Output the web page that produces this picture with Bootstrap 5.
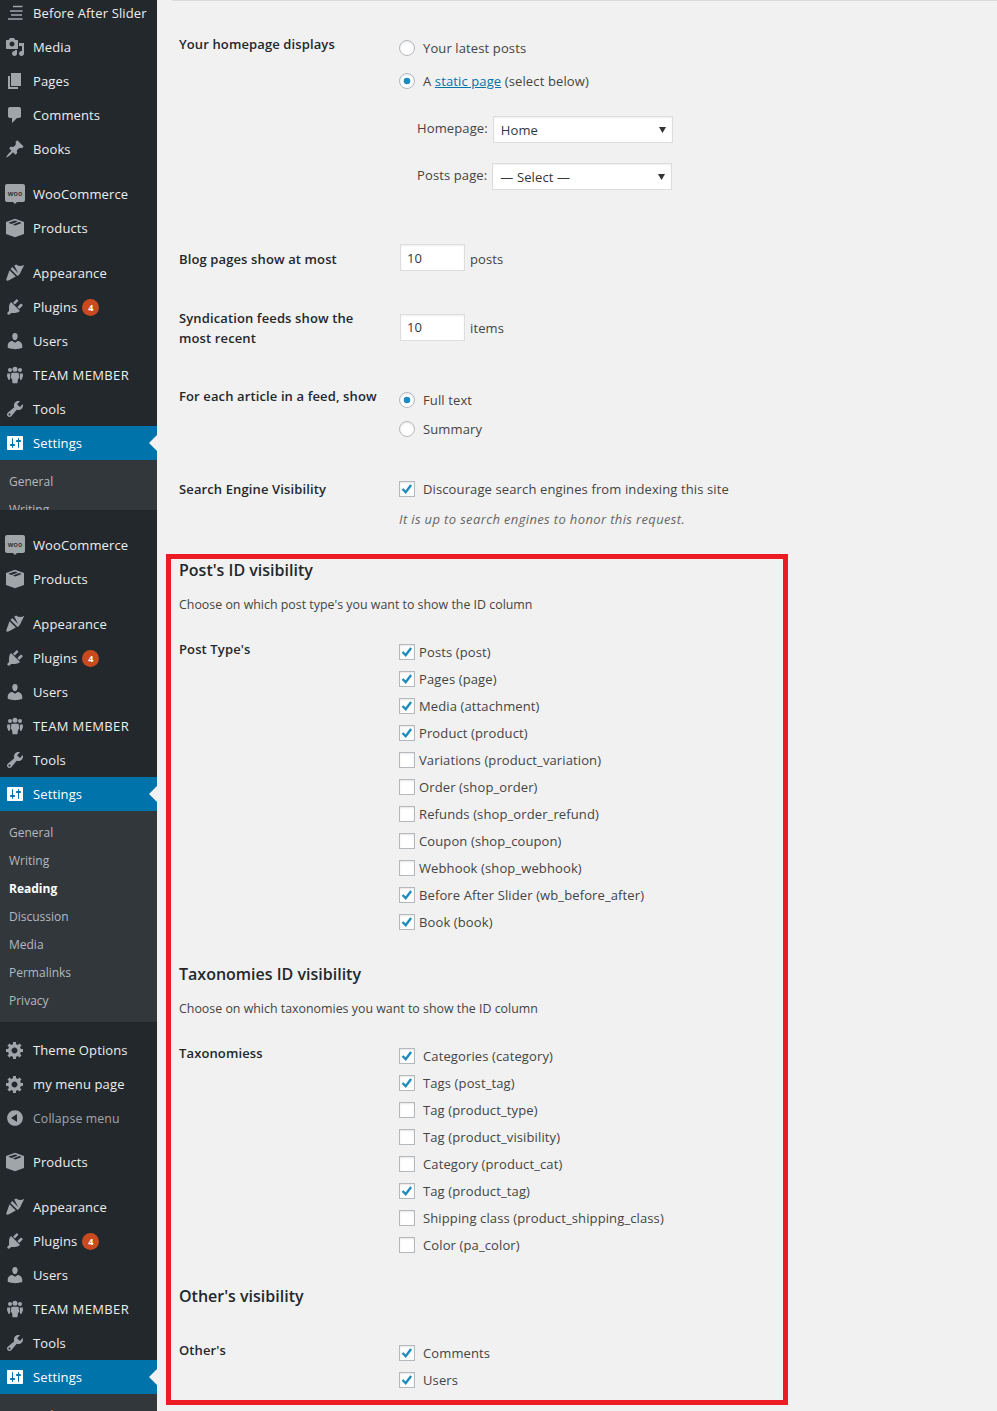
<!DOCTYPE html>
<html lang="en">
<head>
<meta charset="utf-8">
<title>Reading Settings</title>
<link href="https://cdn.jsdelivr.net/npm/bootstrap@5.3.0/dist/css/bootstrap.min.css" rel="stylesheet">
<style>
html,body{margin:0;background:#f1f1f1}
body{font-family:"Open Sans","Noto Sans","Liberation Sans",sans-serif;font-size:13px;line-height:20px;color:#444;overflow:hidden;letter-spacing:.12px}
.shell{height:1411px;width:997px;overflow:hidden;display:flex;align-items:flex-start}
.wp-side{width:157px;height:1411px;flex:none;background:#23282d;color:#eee;overflow:hidden}
.wp-item{height:34px;display:flex;align-items:center;position:relative;color:#eee;text-decoration:none;white-space:nowrap}
.wp-item.first{height:30px;padding-bottom:4px}
.wp-item svg.ico{width:20px;height:20px;margin-left:5px;margin-right:8px;flex:none;color:#a0a5aa;fill:currentColor}
.wp-item.active{background:#0073aa;color:#fff}
.wp-item.active svg.ico{color:#fff}
.wp-item.active::after{content:"";position:absolute;right:0;top:9px;border:8px solid transparent;border-right-color:#f1f1f1;border-left:0}
.wp-item.muted{color:#a0a5aa;font-size:12.3px}
.mut-t{margin-top:2px}
.wp-item.caps{letter-spacing:.38px}
.sep{margin-top:11px}
.sep10{margin-top:10px}
.wp-sub{background:#32373c;padding:8px 0 7px}
.wp-sub.clip{height:50px;overflow:hidden;padding-bottom:0;margin-bottom:18px}
.wp-sub a{display:block;height:28px;line-height:28px;padding-left:9px;color:#b4b9be;font-size:12px;letter-spacing:0;text-decoration:none}
.wp-sub a.cur{color:#fff;font-weight:700}
.pill{width:17px;height:17px;border-radius:50%;background:#ca4a1f;color:#fff;font-size:9px;line-height:17px;text-align:center;font-weight:700;margin-left:5px}
.wp-main{flex:1;min-width:0;position:relative}
.topline{height:1px;background:#dcdcdc;margin-left:15px}
.opt{display:flex;padding-left:22px}
.lab{width:220px;flex:none;font-weight:600;color:#23282d;padding-right:20px}
.line{display:flex;align-items:center;height:20px;white-space:nowrap}
.line input{margin:0 8px 0 0}
.rc{padding-top:4px}
.r-home{margin-top:33px}
.r-static{margin-top:13px}
.pick{display:flex;align-items:center;margin-left:18px;height:27px;white-space:nowrap}
.pick.a{margin-top:25px}
.pick.b{margin-top:20px}
.pick-name{margin-bottom:4px}
.pick .wp-select{margin-left:5px}
.wp-select.form-select{width:180px;height:27px;min-height:0;padding:0 20px 0 7px;border:1px solid #ddd;border-radius:0;font:inherit;letter-spacing:inherit;color:#32373c;background-color:#fff;box-shadow:inset 0 1px 2px rgba(0,0,0,.07);background-image:url("data:image/svg+xml,%3Csvg xmlns='http://www.w3.org/2000/svg' viewBox='0 0 7 6'%3E%3Cpath fill='%23333' d='M0 0h7L3.500 6z'/%3E%3C/svg%3E");background-size:7px 6px;background-position:right 6px center}
.r-blog{margin-top:55px;height:27px;align-items:center}
.r-synd{margin-top:36px;align-items:center}
.r-feed{margin-top:38px}
.r-summary{margin-top:9px}
.r-search{margin-top:40px}
.r-note{margin-top:10px;font-style:italic;color:#666;letter-spacing:.36px}
.num.form-control{width:65px;height:27px;min-height:0;padding:0 6px;margin:-2px 5px 0 1px;border:1px solid #ddd;border-radius:0;font:inherit;letter-spacing:inherit;color:#32373c;background:#fff;box-shadow:inset 0 1px 2px rgba(0,0,0,.07)}
.tick.form-check-input{width:16px;height:16px;flex:none;border:1px solid #b4b9be;background-color:#fff;box-shadow:inset 0 1px 2px rgba(0,0,0,.1);background-size:16px 16px}
.tick.form-check-input[type=checkbox]{border-radius:0}
.tick.form-check-input:checked[type=checkbox]{background-color:#fff;border-color:#b4b9be;background-image:url("data:image/svg+xml,%3Csvg xmlns='http://www.w3.org/2000/svg' viewBox='0 0 16 16'%3E%3Cpath fill='none' stroke='%231e8cbe' stroke-width='2.400' d='M3.500 8l3.200 3.200 5.400-7.200'/%3E%3C/svg%3E")}
.tick.form-check-input:checked[type=radio]{background-color:#fff;border-color:#b4b9be;background-image:url("data:image/svg+xml,%3Csvg xmlns='http://www.w3.org/2000/svg' viewBox='0 0 16 16'%3E%3Ccircle cx='8' cy='8' r='3.300' fill='%231e8cbe'/%3E%3C/svg%3E")}
.redbox{width:622px;margin:25px 0 0 9px;border:5px solid #ed1c24;padding:0 0 7px 8px}
.redbox .opt{padding-left:0}
.head2{font-size:16px;line-height:22px;font-weight:600;color:#23282d;margin:0;white-space:nowrap;letter-spacing:0}
.desc{margin:14px 0 0;height:20px;font-size:12.4px;letter-spacing:0}
.r-types{margin-top:23px}
.h-tax{margin-top:28px}
.h-oth{margin-top:27px}
.r-oth{margin-top:32px}
.redbox .lab{padding-top:1px}
.ck{display:flex;align-items:center;height:27px;white-space:nowrap}
.ck input{margin:0 4px 0 0}
.ck.wide input{margin-right:8px}
a.wp-link{color:#0073aa}
</style>
</head>
<body>
<svg width="0" height="0" class="d-none" aria-hidden="true">
<symbol id="i-lines" viewBox="0 0 20 20"><path d="M8 2.700h9.500v1.600H8zM5 7.200h12.500v1.600H5zM6 11.200h11v1.600H6zM3 15.200h14.500v1.600H3z"/></symbol>
<symbol id="i-media" viewBox="0 0 20 20"><path d="M13 11V4c0-.55-.45-1-1-1h-1.670L9 1H5L3.670 3H2c-.55 0-1 .45-1 1v7c0 .55.45 1 1 1h10c.55 0 1-.45 1-1zM7 4.500c1.380 0 2.500 1.120 2.500 2.500S8.380 9.500 7 9.500 4.500 8.380 4.500 7 5.620 4.500 7 4.500zM14 6h5v10.500c0 1.380-1.120 2.500-2.500 2.500S14 17.880 14 16.500s1.120-2.500 2.500-2.500c.17 0 .34.02.5.05V9h-3V6zm-4 8.050V13h2v3.500c0 1.380-1.120 2.500-2.500 2.500S7 17.880 7 16.500 8.120 14 9.500 14c.17 0 .34.02.5.05z" fill-rule="evenodd"/></symbol>
<symbol id="i-page" viewBox="0 0 20 20"><path d="M6 15V2h10v13H6zm-1 1h8v2H3V5h2v11z"/></symbol>
<symbol id="i-comment" viewBox="0 0 20 20"><path d="M5 2h9c1.100 0 2 .9 2 2v7c0 1.100-.9 2-2 2h-2l-5 5v-5H5c-1.100 0-2-.9-2-2V4c0-1.100.9-2 2-2z"/></symbol>
<symbol id="i-pin" viewBox="0 0 20 20"><path d="M10.440 3.020l1.820-1.820 6.360 6.350-1.830 1.820c-1.050-.68-2.480-.57-3.410.36l-.75.75c-.92.93-1.040 2.350-.35 3.410l-1.830 1.820-2.410-2.410-2.800 2.790c-.42.42-3.380 2.710-3.800 2.290s1.860-3.390 2.280-3.810l2.790-2.790L4.100 9.360l1.830-1.820c1.050.69 2.480.57 3.400-.36l.75-.75c.93-.92 1.050-2.350.36-3.410z"/></symbol>
<symbol id="i-box" viewBox="0 0 20 20"><path fill-rule="evenodd" d="M10 .8l9 3.300v11.800l-9 3.300-9-3.300V4.100zM3.300 4.700l7 2.800 6.300-2.600-2.300-.9-6.400 2.600-1.400-.6 6.300-2.600L10 2.500z"/></symbol>
<symbol id="i-brush" viewBox="0 0 20 20"><path d="M9.200 2.600l2-1.200c2.500 1.900 5.300 2 8 .3-.9 3-2.800 4.700-3.800 8.300l-1.400 1.500zM7.300 4.100l7.200 7.300-2 1.700-7-7.100zM4.500 7.300l6.300 6.300-6.800 3.700c-1.700.8-3.300.7-2.600-1.200z"/></symbol>
<symbol id="i-plug" viewBox="0 0 20 20"><path d="M13.110 4.360L9.870 7.600 8 5.730l3.240-3.240c.35-.34 1.050-.2 1.560.32.52.51.66 1.210.31 1.550zm-8 1.770l.91-1.120 9.010 9.010-1.190.84c-.71.71-2.630 1.160-3.820 1.160H6.140L4.900 17.260c-.59.59-1.540.59-2.120 0-.59-.58-.59-1.530 0-2.120l1.240-1.240v-3.880c0-1.130.4-3.190 1.090-3.890zm7.260 3.970l3.240-3.240c.34-.35 1.040-.21 1.550.31.52.51.66 1.210.31 1.550l-3.240 3.250z"/></symbol>
<symbol id="i-user" viewBox="0 0 20 20"><path d="M10 9.250c-2.270 0-2.730-3.440-2.730-3.440C7 4.020 7.820 2 9.960 2c2.150 0 2.970 2.020 2.700 3.810 0 0-.4 3.440-2.660 3.440zm0 2.570L12.720 10c2.390 0 4.520 2.330 4.520 4.530v2.490s-3.650 1.130-7.240 1.130c-3.650 0-7.240-1.130-7.240-1.130v-2.490c0-2.250 1.940-4.480 4.470-4.480z"/></symbol>
<symbol id="i-group" viewBox="0 0 20 20"><circle cx="5" cy="5" r="2"/><circle cx="15" cy="5" r="2"/><circle cx="10" cy="4.300" r="2.500"/><path d="M2.300 8.500h3l-.3 6.200H3.400L2 11zM17.700 8.500h-3l.3 6.200h1.600L18 11zM6.500 7.800h7l.8 5-1.300 1.300-.6 4.200H7.600L7 14.100l-1.300-1.300z"/></symbol>
<symbol id="i-tool" viewBox="0 0 20 20"><path fill-rule="evenodd" d="M16.680 9.770c-1.340 1.340-3.300 1.670-4.950.99l-5.410 6.520c-.99.99-2.590.99-3.570 0-.99-.98-.99-2.580 0-3.570l6.520-5.420c-.68-1.650-.35-3.610.99-4.950 1.280-1.280 3.120-1.620 4.720-1.060l-2.890 2.890 2.820 2.820 2.860-2.870c.53 1.580.18 3.400-1.090 4.670zM3.810 16.210c.4.39 1.030.39 1.420 0 .4-.4.4-1.030 0-1.430-.39-.39-1.020-.39-1.420 0-.39.4-.39 1.030 0 1.430z"/></symbol>
<symbol id="i-set" viewBox="0 0 20 20"><path fill-rule="evenodd" d="M18 16V4c0-.55-.45-1-1-1H3c-.55 0-1 .45-1 1v12c0 .55.45 1 1 1h14c.55 0 1-.45 1-1zM8 11h1c.55 0 1 .45 1 1s-.45 1-1 1H8v1.500c0 .28-.22.5-.5.5s-.5-.22-.5-.5V13H6c-.55 0-1-.45-1-1s.45-1 1-1h1V5.500c0-.28.22-.5.5-.5s.5.22.5.5V11zm5-2h-1c-.55 0-1-.45-1-1s.45-1 1-1h1V5.500c0-.28.22-.5.5-.5s.5.22.5.5V7h1c.55 0 1 .45 1 1s-.45 1-1 1h-1v5.500c0 .28-.22.5-.5.5s-.5-.22-.5-.5V9z"/></symbol>
<symbol id="i-gear" viewBox="0 0 20 20"><path fill-rule="evenodd" d="M18 12h-2.180c-.17.7-.44 1.350-.81 1.930l1.540 1.540-2.100 2.100-1.540-1.540c-.58.36-1.230.64-1.910.81V19H8v-2.180c-.68-.17-1.330-.45-1.910-.81l-1.540 1.540-2.120-2.120 1.540-1.540c-.36-.58-.63-1.230-.8-1.890H1V9h2.180c.17-.7.44-1.350.8-1.930L2.440 5.530l2.100-2.100 1.540 1.540c.58-.36 1.230-.63 1.920-.8V2h3v2.180c.68.17 1.330.44 1.910.8l1.540-1.540 2.120 2.120-1.540 1.540c.36.58.64 1.230.81 1.900H18V12zm-8.500 1.500c1.660 0 3-1.340 3-3s-1.340-3-3-3-3 1.340-3 3 1.340 3 3 3z"/></symbol>
<symbol id="i-collapse" viewBox="0 0 20 20"><path fill-rule="evenodd" d="M10 2.160c4.330 0 7.840 3.510 7.840 7.840s-3.510 7.840-7.840 7.840S2.160 14.330 2.160 10 5.670 2.160 10 2.160zM12 14V6l-6 4z"/></symbol>
<symbol id="i-woo" viewBox="0 0 20 20"><path d="M2 0h16c1.100 0 2 .9 2 2v14c0 1.100-.9 2-2 2h-6l-2 2-2-2H2c-1.100 0-2-.9-2-2V2C0 .9.9 0 2 0z"/><text x="10" y="11.500" text-anchor="middle" font-family="Open Sans, sans-serif" font-size="7" font-weight="600" fill="#23282d">woo</text></symbol>
</svg>

<div class="shell">
<nav class="wp-side">
  <a class="wp-item first" href="#"><svg class="ico"><use href="#i-lines"/></svg>Before After Slider</a>
  <a class="wp-item" href="#"><svg class="ico"><use href="#i-media"/></svg>Media</a>
  <a class="wp-item" href="#"><svg class="ico"><use href="#i-page"/></svg>Pages</a>
  <a class="wp-item" href="#"><svg class="ico"><use href="#i-comment"/></svg>Comments</a>
  <a class="wp-item" href="#"><svg class="ico"><use href="#i-pin"/></svg>Books</a>
  <a class="wp-item sep" href="#"><svg class="ico"><use href="#i-woo"/></svg>WooCommerce</a>
  <a class="wp-item" href="#"><svg class="ico"><use href="#i-box"/></svg>Products</a>
  <a class="wp-item sep" href="#"><svg class="ico"><use href="#i-brush"/></svg>Appearance</a>
  <a class="wp-item" href="#"><svg class="ico"><use href="#i-plug"/></svg>Plugins<span class="pill">4</span></a>
  <a class="wp-item" href="#"><svg class="ico"><use href="#i-user"/></svg>Users</a>
  <a class="wp-item caps" href="#"><svg class="ico"><use href="#i-group"/></svg>TEAM MEMBER</a>
  <a class="wp-item" href="#"><svg class="ico"><use href="#i-tool"/></svg>Tools</a>
  <a class="wp-item active" href="#"><svg class="ico"><use href="#i-set"/></svg>Settings</a>
  <div class="wp-sub clip"><a href="#">General</a><a href="#">Writing</a></div>

  <a class="wp-item" href="#"><svg class="ico"><use href="#i-woo"/></svg>WooCommerce</a>
  <a class="wp-item" href="#"><svg class="ico"><use href="#i-box"/></svg>Products</a>
  <a class="wp-item sep" href="#"><svg class="ico"><use href="#i-brush"/></svg>Appearance</a>
  <a class="wp-item" href="#"><svg class="ico"><use href="#i-plug"/></svg>Plugins<span class="pill">4</span></a>
  <a class="wp-item" href="#"><svg class="ico"><use href="#i-user"/></svg>Users</a>
  <a class="wp-item caps" href="#"><svg class="ico"><use href="#i-group"/></svg>TEAM MEMBER</a>
  <a class="wp-item" href="#"><svg class="ico"><use href="#i-tool"/></svg>Tools</a>
  <a class="wp-item active" href="#"><svg class="ico"><use href="#i-set"/></svg>Settings</a>
  <div class="wp-sub">
    <a href="#">General</a><a href="#">Writing</a><a class="cur" href="#">Reading</a><a href="#">Discussion</a><a href="#">Media</a><a href="#">Permalinks</a><a href="#">Privacy</a>
  </div>
  <a class="wp-item sep" href="#"><svg class="ico"><use href="#i-gear"/></svg>Theme Options</a>
  <a class="wp-item" href="#"><svg class="ico"><use href="#i-gear"/></svg>my menu page</a>
  <a class="wp-item muted" href="#"><svg class="ico"><use href="#i-collapse"/></svg><span class="mut-t">Collapse menu</span></a>
  <a class="wp-item sep10" href="#"><svg class="ico"><use href="#i-box"/></svg>Products</a>
  <a class="wp-item sep" href="#"><svg class="ico"><use href="#i-brush"/></svg>Appearance</a>
  <a class="wp-item" href="#"><svg class="ico"><use href="#i-plug"/></svg>Plugins<span class="pill">4</span></a>
  <a class="wp-item" href="#"><svg class="ico"><use href="#i-user"/></svg>Users</a>
  <a class="wp-item caps" href="#"><svg class="ico"><use href="#i-group"/></svg>TEAM MEMBER</a>
  <a class="wp-item" href="#"><svg class="ico"><use href="#i-tool"/></svg>Tools</a>
  <a class="wp-item active" href="#"><svg class="ico"><use href="#i-set"/></svg>Settings</a>
  <div class="wp-sub"><a href="#">General</a></div>
</nav>

<main class="wp-main">
  <div class="topline"></div>
  <div class="opt r-home">
    <div class="lab">Your homepage displays</div>
    <div class="rc">
      <label class="line"><input class="form-check-input tick" type="radio" name="home">Your latest posts</label>
      <label class="line r-static"><input class="form-check-input tick" type="radio" name="home" checked><span>A <a class="wp-link" href="#">static page</a> (select below)</span></label>
      <div class="pick a"><span class="pick-name">Homepage:</span><select class="form-select wp-select"><option>Home</option></select></div>
      <div class="pick b"><span class="pick-name">Posts page:</span><select class="form-select wp-select"><option>— Select —</option></select></div>
    </div>
  </div>
  <div class="opt r-blog">
    <div class="lab">Blog pages show at most</div>
    <input class="form-control num" type="text" value="10">posts
  </div>
  <div class="opt r-synd">
    <div class="lab">Syndication feeds show the most recent</div>
    <input class="form-control num" type="text" value="10">items
  </div>
  <div class="opt r-feed">
    <div class="lab">For each article in a feed, show</div>
    <div class="rc">
      <label class="line"><input class="form-check-input tick" type="radio" name="feed" checked>Full text</label>
      <label class="line r-summary"><input class="form-check-input tick" type="radio" name="feed">Summary</label>
    </div>
  </div>
  <div class="opt r-search">
    <div class="lab">Search Engine Visibility</div>
    <div>
      <label class="line"><input class="form-check-input tick" type="checkbox" checked>Discourage search engines from indexing this site</label>
      <p class="r-note mb-0">It is up to search engines to honor this request.</p>
    </div>
  </div>

  <section class="redbox">
    <h2 class="head2">Post's ID visibility</h2>
    <p class="desc">Choose on which post type's you want to show the ID column</p>
    <div class="opt r-types">
      <div class="lab">Post Type's</div>
      <div>
        <label class="ck"><input class="form-check-input tick" type="checkbox" checked>Posts (post)</label>
        <label class="ck"><input class="form-check-input tick" type="checkbox" checked>Pages (page)</label>
        <label class="ck"><input class="form-check-input tick" type="checkbox" checked>Media (attachment)</label>
        <label class="ck"><input class="form-check-input tick" type="checkbox" checked>Product (product)</label>
        <label class="ck"><input class="form-check-input tick" type="checkbox">Variations (product_variation)</label>
        <label class="ck"><input class="form-check-input tick" type="checkbox">Order (shop_order)</label>
        <label class="ck"><input class="form-check-input tick" type="checkbox">Refunds (shop_order_refund)</label>
        <label class="ck"><input class="form-check-input tick" type="checkbox">Coupon (shop_coupon)</label>
        <label class="ck"><input class="form-check-input tick" type="checkbox">Webhook (shop_webhook)</label>
        <label class="ck"><input class="form-check-input tick" type="checkbox" checked>Before After Slider (wb_before_after)</label>
        <label class="ck"><input class="form-check-input tick" type="checkbox" checked>Book (book)</label>
      </div>
    </div>
    <h2 class="head2 h-tax">Taxonomies ID visibility</h2>
    <p class="desc">Choose on which taxonomies you want to show the ID column</p>
    <div class="opt r-types">
      <div class="lab">Taxonomiess</div>
      <div>
        <label class="ck wide"><input class="form-check-input tick" type="checkbox" checked>Categories (category)</label>
        <label class="ck wide"><input class="form-check-input tick" type="checkbox" checked>Tags (post_tag)</label>
        <label class="ck wide"><input class="form-check-input tick" type="checkbox">Tag (product_type)</label>
        <label class="ck wide"><input class="form-check-input tick" type="checkbox">Tag (product_visibility)</label>
        <label class="ck wide"><input class="form-check-input tick" type="checkbox">Category (product_cat)</label>
        <label class="ck wide"><input class="form-check-input tick" type="checkbox" checked>Tag (product_tag)</label>
        <label class="ck wide"><input class="form-check-input tick" type="checkbox">Shipping class (product_shipping_class)</label>
        <label class="ck wide"><input class="form-check-input tick" type="checkbox">Color (pa_color)</label>
      </div>
    </div>
    <h2 class="head2 h-oth">Other's visibility</h2>
    <div class="opt r-oth">
      <div class="lab">Other's</div>
      <div>
        <label class="ck wide"><input class="form-check-input tick" type="checkbox" checked>Comments</label>
        <label class="ck wide"><input class="form-check-input tick" type="checkbox" checked>Users</label>
      </div>
    </div>
  </section>
</main>
</div>
<script src="https://cdn.jsdelivr.net/npm/bootstrap@5.3.0/dist/js/bootstrap.bundle.min.js"></script>
</body>
</html>
